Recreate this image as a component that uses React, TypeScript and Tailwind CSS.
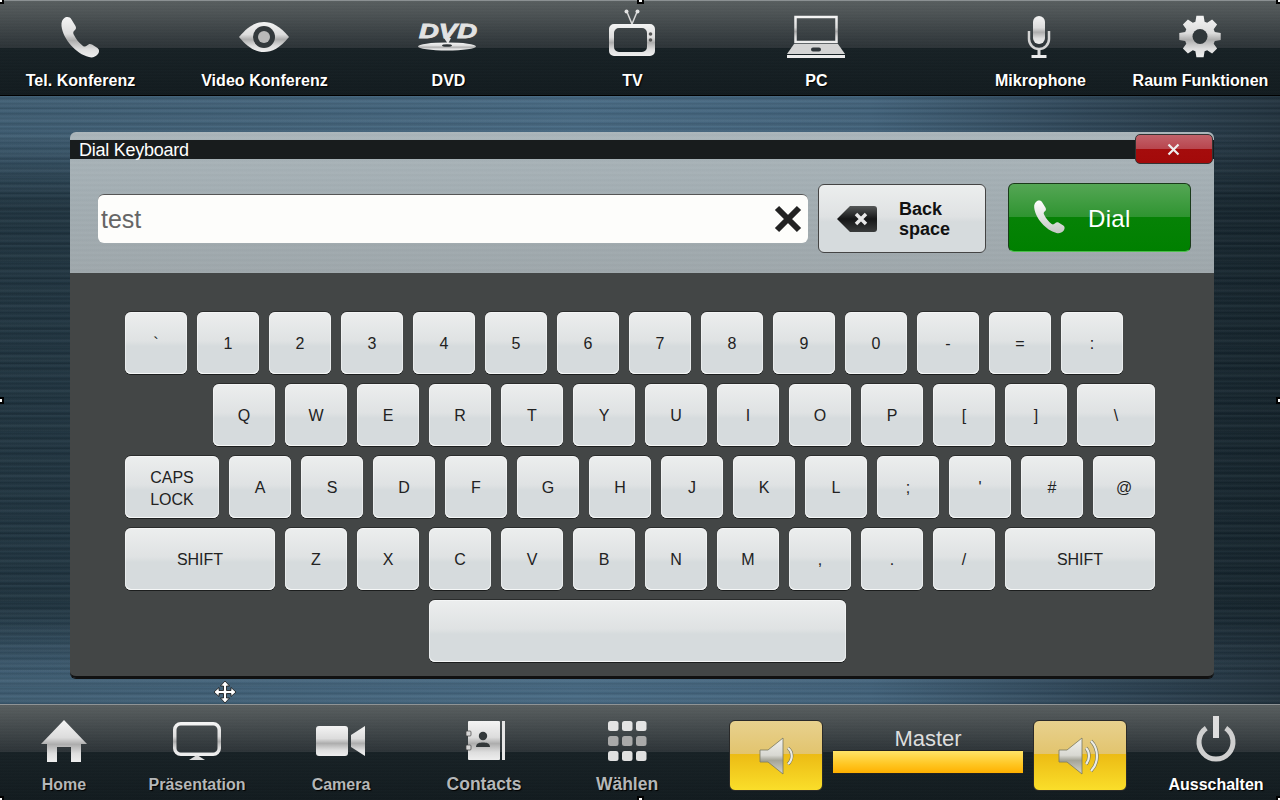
import { ReactNode } from "react";

const FONT = "font-['Liberation_Sans',Arial,sans-serif]";

// same colour stops on nearly every icon in the picture
function Chrome({ id }: { id: string }) {
  return (
    <defs>
      <linearGradient id={id} x1="0" y1="0" x2="0" y2="1">
        <stop offset="0" stopColor="#f4f4f4" />
        <stop offset="0.42" stopColor="#dcdcdc" />
        <stop offset="0.58" stopColor="#adadad" />
        <stop offset="0.8" stopColor="#dedede" />
        <stop offset="1" stopColor="#eeeeee" />
      </linearGradient>
    </defs>
  );
}

function Box({ children }: { children: ReactNode }) {
  return (
    <svg width="64" height="50" viewBox="0 0 64 50" className="overflow-visible">
      {children}
    </svg>
  );
}

const PHONE =
  "M17 3.5C20 2.5 22 3 23.5 5.5L27.5 12C28.5 14 28 15.5 26 17C25 18 25 19.5 26 21C28 25 31 29 35 32C36.5 33 38 32.5 39 31.5C40.5 30 42 29.5 44 30.5L49.5 34C51.5 35.5 51.5 38 50 40C47.5 43 44 44 41 43C28 40 15 25 13.5 12C13 8 14.5 5 17 3.5Z";

function PhoneIcon() {
  return (
    <Box>
      <Chrome id="c-phone" />
      <path d={PHONE} fill="url(#c-phone)" />
    </Box>
  );
}

function EyeIcon() {
  return (
    <Box>
      <Chrome id="c-eye" />
      <path d="M7 23C16 12 24 8 32 8C40 8 48 12 57 23C48 34 40 38 32 38C24 38 16 34 7 23Z" fill="url(#c-eye)" />
      <circle cx="32" cy="23" r="11" fill="#33393c" />
      <circle cx="32" cy="23" r="6" fill="#b9b9b9" />
    </Box>
  );
}

function DvdIcon() {
  return (
    <Box>
      <Chrome id="c-dvd" />
      <text
        x="3"
        y="24"
        textLength="58"
        lengthAdjust="spacingAndGlyphs"
        fontFamily="Liberation Sans"
        fontWeight="bold"
        fontStyle="italic"
        fontSize="21"
        fill="#e2e2e2"
        stroke="#e2e2e2"
        strokeWidth="0.9"
      >
        DVD
      </text>
      <path d="M28 24H35L32 30Z" fill="#e2e2e2" />
      <ellipse cx="31" cy="32.5" rx="29" ry="4" fill="url(#c-dvd)" />
      <ellipse cx="31" cy="31.5" rx="5" ry="1.3" fill="#2b3134" />
    </Box>
  );
}

function TvIcon() {
  return (
    <Box>
      <Chrome id="c-tv" />
      <path d="M27 -2L32 10L37 -2" fill="none" stroke="#d8d8d8" strokeWidth="1.5" />
      <circle cx="26.5" cy="-2.5" r="2" fill="#e4e4e4" />
      <circle cx="37.5" cy="-2.5" r="2" fill="#e4e4e4" />
      <path
        fillRule="evenodd"
        d="M14 10H50A5 5 0 0 1 55 15V37A5 5 0 0 1 50 42H14A5 5 0 0 1 9 37V15A5 5 0 0 1 14 10ZM19 14A5 5 0 0 0 14 19V33A5 5 0 0 0 19 38H42A5 5 0 0 0 47 33V19A5 5 0 0 0 42 14Z"
        fill="url(#c-tv)"
      />
      <circle cx="50.5" cy="20" r="1.8" fill="#555" />
      <circle cx="50.5" cy="26" r="1.8" fill="#555" />
    </Box>
  );
}

function LaptopIcon() {
  return (
    <Box>
      <Chrome id="c-pc" />
      <rect x="11.5" y="3" width="41" height="25" fill="none" stroke="url(#c-pc)" strokeWidth="2.5" />
      <path d="M10 30H54L61 40H3Z" fill="#d4d4d4" />
      <rect x="27" y="33.5" width="10" height="4" rx="2" fill="#30363a" />
      <rect x="3" y="41" width="58" height="3" fill="#ececec" />
    </Box>
  );
}

function MicIcon() {
  return (
    <Box>
      <Chrome id="c-mic" />
      <rect x="25" y="2" width="12" height="28" rx="6" fill="url(#c-mic)" />
      <path d="M21 17V25A10 10 0 0 0 41 25V17" fill="none" stroke="#d4d4d4" strokeWidth="2.5" />
      <rect x="29.5" y="35" width="3" height="7" fill="#dcdcdc" />
      <rect x="23.5" y="41" width="15" height="3" fill="#ececec" />
    </Box>
  );
}

function GearIcon() {
  const teeth = 8;
  const pts: string[] = [];
  for (let i = 0; i < teeth; i++) {
    const a = (i * 2 * Math.PI) / teeth;
    [
      [-0.3, 15.5],
      [-0.17, 21],
      [0.17, 21],
      [0.3, 15.5],
    ].forEach(([o, r]) => {
      pts.push(`${(32 + r * Math.sin(a + o)).toFixed(1)} ${(22.5 - r * Math.cos(a + o)).toFixed(1)}`);
    });
  }
  const d = `M${pts.join("L")}Z`;
  return (
    <Box>
      <Chrome id="c-gear" />
      <path d={d} fill="url(#c-gear)" />
      <circle cx="32" cy="22.5" r="7.5" fill="#30373a" />
    </Box>
  );
}

function HomeIcon() {
  return (
    <Box>
      <Chrome id="c-home" />
      <path d="M32 1L55 25H49V43H39V28H25V43H15V25H9Z" fill="url(#c-home)" />
    </Box>
  );
}

function MonitorIcon() {
  return (
    <Box>
      <Chrome id="c-mon" />
      <rect x="9.75" y="4.75" width="44.5" height="30.5" rx="6" fill="none" stroke="url(#c-mon)" strokeWidth="3.5" />
      <path d="M32 36L40 41H24Z" fill="#dcdcdc" />
    </Box>
  );
}

function CameraIcon() {
  return (
    <Box>
      <Chrome id="c-cam" />
      <rect x="7" y="7" width="32" height="30" rx="3" fill="url(#c-cam)" />
      <path d="M42 16L56 7V37L42 28Z" fill="url(#c-cam)" />
    </Box>
  );
}

function ContactsIcon() {
  return (
    <Box>
      <Chrome id="c-con" />
      <rect x="16" y="2" width="32" height="39" rx="1" fill="url(#c-con)" />
      <rect x="50" y="2" width="3" height="39" fill="#e6e6e6" />
      <rect x="14" y="12" width="5" height="5" rx="1" fill="#d8d8d8" stroke="#444" strokeWidth="0.7" />
      <rect x="14" y="26" width="5" height="5" rx="1" fill="#d8d8d8" stroke="#444" strokeWidth="0.7" />
      <circle cx="31" cy="17" r="4.2" fill="#33383a" />
      <path d="M24 28C24 24 28 23.5 31 23.5C34 23.5 38 24 38 28Z" fill="#33383a" />
    </Box>
  );
}

function GridIcon() {
  const rows = [
    { y: 2, fill: "#e4e4e4" },
    { y: 17, fill: "#a9a9a9" },
    { y: 32, fill: "#e0e0e0" },
  ];
  return (
    <Box>
      {rows.map((r) =>
        [13, 27, 41].map((x) => (
          <rect key={`${x}-${r.y}`} x={x} y={r.y} width="10.5" height="10" rx="2.5" fill={r.fill} />
        ))
      )}
    </Box>
  );
}

function PowerIcon() {
  return (
    <Box>
      <path d="M22.25 9.1A17 17 0 1 0 41.75 9.1" fill="none" stroke="#cfcfcf" strokeWidth="5" />
      <rect x="29" y="-3" width="6" height="22" fill="#dedede" />
    </Box>
  );
}

function Wave({ d }: { d: string }) {
  return (
    <>
      <path d={d} fill="none" stroke="#77775f" strokeWidth="3.4" />
      <path d={d} fill="none" stroke="#ecece6" strokeWidth="2.2" />
    </>
  );
}

function SpeakerIcon({ loud }: { loud?: boolean }) {
  const id = loud ? "c-spk2" : "c-spk1";
  const dx = loud ? 25 : 30;
  return (
    <svg width="94" height="70" viewBox="0 0 94 70" className="absolute left-0 top-0">
      <defs>
        <linearGradient id={id} x1="0" y1="0" x2="0" y2="1">
          <stop offset="0" stopColor="#f2f2ee" />
          <stop offset="0.48" stopColor="#d8d8d2" />
          <stop offset="0.62" stopColor="#a4a498" />
          <stop offset="1" stopColor="#d4d4ca" />
        </linearGradient>
      </defs>
      <g transform={`translate(${dx} 0)`}>
        <path d="M0 29H8L23 17V53L8 41H0Z" fill={`url(#${id})`} stroke="#77775f" strokeWidth="0.8" />
        {loud ? (
          <>
            <Wave d="M27 27C31 31 31 39 27 43" />
            <Wave d="M32 20C40 28 40 42 32 50" />
          </>
        ) : (
          <Wave d="M28 27C33 31 33 39 28 43" />
        )}
      </g>
    </svg>
  );
}

function TopItem({ icon, label, className = "" }: { icon: ReactNode; label: string; className?: string }) {
  return (
    <div className={`flex w-[160px] shrink-0 flex-col items-center pt-[13px] ${className}`}>
      <div className="h-[50px]">{icon}</div>
      <span className="mt-[7px] pl-[1px] text-[16px] leading-5 font-bold tracking-[0.05px] whitespace-nowrap text-white [text-shadow:1px_1px_1px_#000]">
        {label}
      </span>
    </div>
  );
}

function BottomItem({
  icon,
  label,
  className = "",
  labelClass = "pt-[1px] text-[16px] text-[#b5b7b8]",
}: {
  icon: ReactNode;
  label: string;
  className?: string;
  labelClass?: string;
}) {
  return (
    <div className={`flex shrink-0 flex-col items-center pt-[14px] ${className}`}>
      <div className="h-[50px]">{icon}</div>
      <span className={`mt-[5px] leading-5 font-bold whitespace-nowrap [text-shadow:1px_1px_1px_#000] ${labelClass}`}>
        {label}
      </span>
    </div>
  );
}

function Key({ label, className = "w-[62px] pt-[2px]" }: { label?: ReactNode; className?: string }) {
  return (
    <div
      className={`flex h-[62px] shrink-0 items-center justify-center rounded-[6px] bg-[linear-gradient(#eceeee_0%,#dfe2e3_47%,#d6dbdd_55%,#d6dbdd_100%)] text-center text-[16px] leading-[22px] text-[#222] shadow-[inset_0_-1px_0_#f4f6f6,inset_0_0_0_1px_rgba(255,255,255,0.45),0_-1px_0_#2a2c2c,0_1px_0_#1c1e1e] ${className}`}
    >
      {label}
    </div>
  );
}

function Handle({ className }: { className: string }) {
  return <div className={`absolute h-[7px] w-[7px] border-2 border-black bg-white ${className}`} />;
}

const ROW1 = ["`", "1", "2", "3", "4", "5", "6", "7", "8", "9", "0", "-", "=", ":"];
const ROW2 = ["Q", "W", "E", "R", "T", "Y", "U", "I", "O", "P", "[", "]"];
const ROW3 = ["A", "S", "D", "F", "G", "H", "J", "K", "L", ";", "'", "#", "@"];
const ROW4 = ["Z", "X", "C", "V", "B", "N", "M", ",", ".", "/"];

const BAR =
  "bg-[repeating-linear-gradient(0deg,rgba(255,255,255,0.015)_0px,rgba(0,0,0,0.03)_2px,rgba(255,255,255,0.015)_3px),linear-gradient(#595f60_0%,#2c3337_50%,#172125_50%,#121b1f_100%)]";

export default function App() {
  return (
    <div className={`relative flex h-[800px] w-[1280px] flex-col overflow-hidden ${FONT}`}>
      <header className={`flex h-[96px] shrink-0 border-t border-t-[#8b9092] border-b border-b-black ${BAR}`}>
        <TopItem icon={<PhoneIcon />} label="Tel. Konferenz" />
        <TopItem icon={<EyeIcon />} label="Video Konferenz" className="mx-[24px]" />
        <TopItem icon={<DvdIcon />} label="DVD" />
        <TopItem icon={<TvIcon />} label="TV" className="mx-[24px]" />
        <TopItem icon={<LaptopIcon />} label="PC" />
        <TopItem icon={<MicIcon />} label="Mikrophone" className="ml-[64px]" />
        <TopItem icon={<GearIcon />} label="Raum Funktionen" />
      </header>

      <main className="flex-1 bg-[repeating-linear-gradient(0deg,rgba(0,0,0,0.1)_0px,rgba(0,0,0,0)_2px,rgba(255,255,255,0.04)_3px,rgba(0,0,0,0.06)_5px),repeating-linear-gradient(0deg,rgba(0,0,0,0.07)_0px,rgba(255,255,255,0.03)_7px,rgba(0,0,0,0.05)_11px,rgba(255,255,255,0.02)_17px),linear-gradient(180deg,rgba(12,26,32,0)_36px,rgba(12,26,32,0.62)_110px,rgba(12,26,32,0.62)_510px,rgba(12,26,32,0)_580px),linear-gradient(90deg,#3f5e74_0%,#486b85_45%,#43647d_68%,#2f4759_85%,#22333f_100%)] pt-[36px] pl-[70px]">
        <section className="relative flex h-[546px] w-[1144px] flex-col overflow-visible rounded-[6px] shadow-[0_1px_0_#111]">
          <div className="h-[141px] shrink-0 rounded-t-[6px] bg-[repeating-linear-gradient(0deg,rgba(255,255,255,0.025)_0px,rgba(0,0,0,0.02)_3px,rgba(255,255,255,0.025)_5px),linear-gradient(#abb6bb_0%,#a3aeb3_45%,#9fa8ac_100%)] pt-[8px]">
            <div className="h-[19px] bg-[#181c1d] pl-[9px] text-[18px] leading-[20px] tracking-[-0.25px] text-white">
              Dial Keyboard
            </div>
            <div className="mt-[24px] flex items-start pl-[28px]">
              <div className="mt-[11px] flex h-[49px] w-[710px] items-center justify-between rounded-[6px] border-t border-t-[#555] bg-[#fdfdfb] pr-[5px] pl-[3px]">
                <span className="pt-[1px] text-[25px] text-[#666]">test</span>
                <svg width="30" height="30" viewBox="0 0 30 30">
                  <path d="M4 4L26 26M26 4L4 26" stroke="#222" strokeWidth="6" />
                </svg>
              </div>
              <button
                type="button"
                className="mt-[1px] ml-[10px] flex h-[69px] w-[168px] items-center gap-[22px] rounded-[6px] border border-[#444] bg-[linear-gradient(#eceeee_0%,#dfe2e3_47%,#d6dbdd_55%,#d6dbdd_100%)] pl-[18px]"
              >
                <svg width="40" height="26" viewBox="0 0 40 26">
                  <defs>
                    <linearGradient id="c-bs" x1="0" y1="0" x2="0" y2="1">
                      <stop offset="0" stopColor="#555858" />
                      <stop offset="0.5" stopColor="#151617" />
                      <stop offset="1" stopColor="#3a3c3c" />
                    </linearGradient>
                  </defs>
                  <path d="M0 13L13 0H37A3 3 0 0 1 40 3V23A3 3 0 0 1 37 26H13Z" fill="url(#c-bs)" />
                  <path d="M19 8L29 18M29 8L19 18" stroke="#e8e8e8" strokeWidth="3.5" />
                </svg>
                <span className="text-left text-[18px] leading-5 font-bold text-[#111]">
                  Back
                  <br />
                  space
                </span>
              </button>
              <button
                type="button"
                className="ml-[22px] flex h-[69px] w-[183px] items-center rounded-[6px] border border-[#1a3a1a] border-b-[#4cc04c] bg-[linear-gradient(#55a655_0%,#2e9430_50%,#068206_50%,#008000_100%)] pl-[24px]"
              >
                <svg width="34" height="37" viewBox="12 2 42 44">
                  <defs>
                    <linearGradient id="c-dial" x1="0" y1="0" x2="0" y2="1">
                      <stop offset="0" stopColor="#ffffff" />
                      <stop offset="1" stopColor="#c4c8c4" />
                    </linearGradient>
                  </defs>
                  <path d={PHONE} fill="url(#c-dial)" />
                </svg>
                <span className="ml-[21px] pt-[2px] text-[24px] tracking-[0.3px] text-white">Dial</span>
              </button>
            </div>
          </div>

          <div className="flex flex-1 flex-col gap-[10px] rounded-b-[6px] border-b-2 border-b-[#111] bg-[#434646] pt-[39px] pl-[55px]">
            <div className="flex gap-[10px]">
              {ROW1.map((k) => (
                <Key key={k} label={k} />
              ))}
            </div>
            <div className="ml-[88px] flex gap-[10px]">
              {ROW2.map((k) => (
                <Key key={k} label={k} />
              ))}
              <Key label="\" className="w-[78px] pt-[2px]" />
            </div>
            <div className="flex gap-[10px]">
              <Key
                label={
                  <>
                    CAPS
                    <br />
                    LOCK
                  </>
                }
                className="w-[94px] pt-[4px]"
              />
              {ROW3.map((k) => (
                <Key key={k} label={k} />
              ))}
            </div>
            <div className="flex gap-[10px]">
              <Key label="SHIFT" className="w-[150px] pt-[2px]" />
              {ROW4.map((k) => (
                <Key key={k} label={k} />
              ))}
              <Key label="SHIFT" className="w-[150px] pt-[2px]" />
            </div>
            <div className="ml-[304px] flex">
              <Key className="w-[417px]" />
            </div>
          </div>

          {/* close sits over the title bar */}
          <button
            type="button"
            className="absolute top-[2px] left-[1065px] flex h-[30px] w-[78px] items-center justify-center rounded-[5px] border border-[#333] bg-[linear-gradient(#c2626a_0%,#b8454d_50%,#a50c0c_50%,#a30a0a_100%)] pr-[2px]"
          >
            <svg width="13" height="13" viewBox="0 0 13 13">
              <path d="M1.5 1.5L11.5 11.5M11.5 1.5L1.5 11.5" stroke="#eeeeee" strokeWidth="2.2" />
            </svg>
          </button>
        </section>
      </main>

      <footer className={`flex h-[96px] shrink-0 border-t border-t-[#8f9496] ${BAR}`}>
        <BottomItem icon={<HomeIcon />} label="Home" className="w-[128px]" />
        <BottomItem icon={<MonitorIcon />} label="Präsentation" className="w-[138px]" />
        <BottomItem icon={<CameraIcon />} label="Camera" className="w-[150px]" />
        <BottomItem icon={<ContactsIcon />} label="Contacts" className="w-[136px]" labelClass="text-[17.5px] text-[#b5b7b8]" />
        <BottomItem icon={<GridIcon />} label="Wählen" className="w-[150px]" labelClass="text-[17.5px] text-[#b5b7b8]" />

        <div className="mt-[15px] ml-[27px] flex items-start gap-[10px]">
          <div className="relative h-[71px] w-[94px] rounded-[6px] border border-[#2a2a2a] bg-[linear-gradient(#e8d18e_0%,#e2c46e_48%,#ecbb14_48%,#fade2a_100%)]">
            <SpeakerIcon />
          </div>
          <div className="flex w-[190px] flex-col items-center pt-[7px]">
            <span className="text-[22px] leading-[23px] text-[#dddddd]">Master</span>
            <div className="h-[24px] w-full border-t border-b border-[#222] bg-[linear-gradient(#ffe468_0%,#ffc622_60%,#ffb000_100%)]" />
          </div>
          <div className="relative h-[71px] w-[94px] rounded-[6px] border border-[#2a2a2a] bg-[linear-gradient(#e8d18e_0%,#e2c46e_48%,#ecbb14_48%,#fade2a_100%)]">
            <SpeakerIcon loud />
          </div>
        </div>

        <BottomItem icon={<PowerIcon />} label="Ausschalten" className="ml-[25px] w-[128px]" labelClass="pt-[1px] text-[16px] text-white" />
      </footer>

      {/* drag cursor and selection handles lie on top of the screen capture */}
      <svg width="24" height="24" viewBox="0 0 24 24" className="absolute top-[680px] left-[213px]">
        <path
          d="M12 1L16.5 6H13.5V10.5H18V7.5L23 12L18 16.5V13.5H13.5V18H16.5L12 23L7.5 18H10.5V13.5H6V16.5L1 12L6 7.5V10.5H10.5V6H7.5Z"
          fill="#ffffff"
          stroke="#111111"
          strokeWidth="0.8"
        />
      </svg>
      <Handle className="top-[-3px] left-[-3px]" />
      <Handle className="top-[-3px] left-[637px]" />
      <Handle className="top-[-3px] right-[-3px]" />
      <Handle className="top-[397px] left-[-3px]" />
      <Handle className="top-[397px] right-[-3px]" />
      <Handle className="bottom-[-3px] left-[-3px]" />
      <Handle className="bottom-[-3px] left-[637px]" />
      <Handle className="right-[-3px] bottom-[-3px]" />
    </div>
  );
}
